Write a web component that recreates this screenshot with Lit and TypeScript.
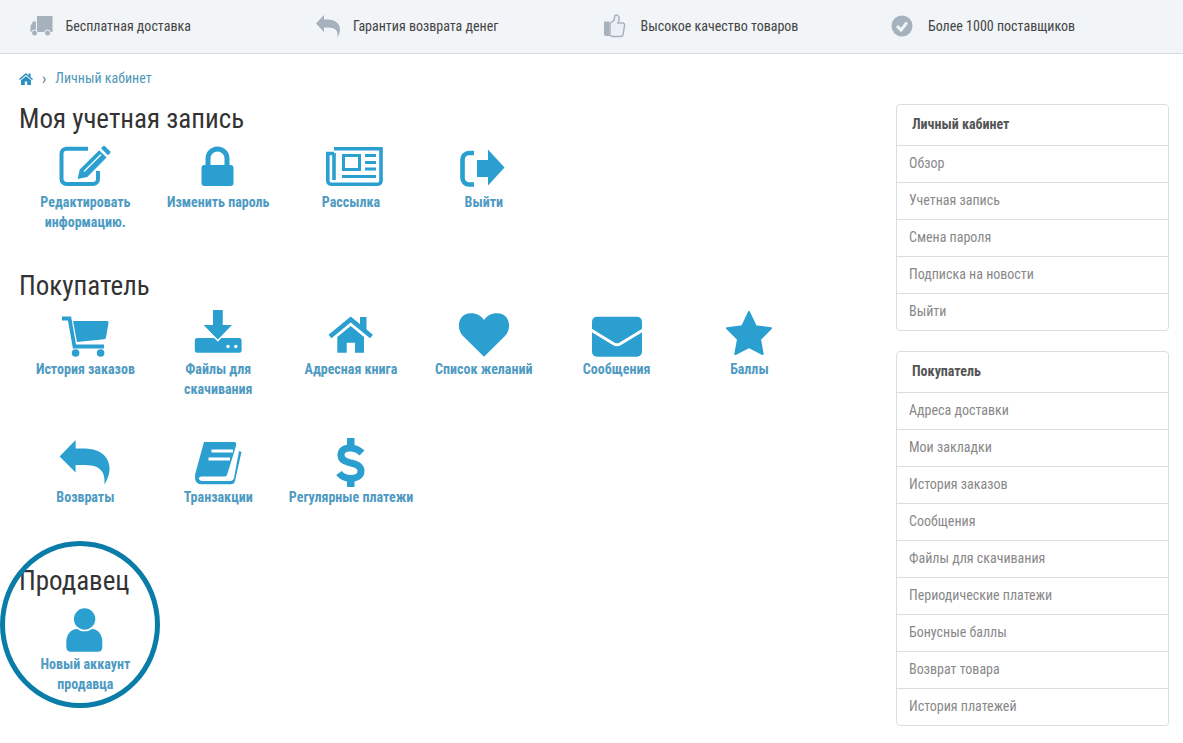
import { LitElement, html, css, svg } from "lit";
import { customElement } from "lit/decorators.js";

const I = {
  edit: svg`<path d="M33 6.8H11.5a5 5 0 0 0-5 5V37a5 5 0 0 0 5 5H38a5 5 0 0 0 5-5V29" fill="none" stroke="currentColor" stroke-width="4"/><path d="M22.6 37l2.2-9.6L44.2 8.2l7.3 7.4L32.3 35z"/><path d="M46 6.2l2-2q1-1 2 0l5 5q1 1 0 2l-2 2z"/><path d="M29 29.5L46 12.5" stroke="#fff" stroke-width="1.2"/>`,
  lock: svg`<rect x="13.5" y="23" width="32" height="21" rx="3"/><path d="M20 24v-7.5a9.5 9.5 0 0 1 19 0V24" fill="none" stroke="currentColor" stroke-width="5"/>`,
  news: svg`<path d="M13 6.8H60V39a3.2 3.2 0 0 1-3.2 3.2H10A3.3 3.3 0 0 1 6.8 39V11.5H13M13 11v27" fill="none" stroke="currentColor" stroke-width="3.6"/><rect x="22.5" y="13.5" width="16" height="14" fill="none" stroke="currentColor" stroke-width="3"/><path d="M44 13.5h11M44 20.5h11M44 27h11M21 34.5h34" stroke="currentColor" stroke-width="3" fill="none"/>`,
  out: svg`<path d="M20 11H15a6.5 6.5 0 0 0-6.5 6.5V36a6.5 6.5 0 0 0 6.5 6.5H20" fill="none" stroke="currentColor" stroke-width="4.6"/><path d="M23 18H34V7.5L50.5 25.5 34 43.5V35H23z"/>`,
  cart: svg`<path d="M18 12H52a1.5 1.5 0 0 1 1.5 1.7L51 28.5a2 2 0 0 1-2 1.7L22 33z"/><path d="M7 9.5H14.5L19.5 37.5H49" fill="none" stroke="currentColor" stroke-width="3.8"/><circle cx="20.6" cy="44" r="3.8"/><circle cx="45.6" cy="44" r="3.8"/>`,
  down: svg`<rect x="6.8" y="29" width="46.8" height="14.7" rx="2.5"/><path d="M25 1H34.5V16H43.8L29.8 30.5 15.8 16H25z" stroke="#fff" stroke-width="3" paint-order="stroke"/><path d="M25 1H34.5V16H43.8L29.8 30 15.8 16H25z"/><circle cx="40" cy="37.5" r="1.7" fill="#fff"/><circle cx="47.8" cy="37.5" r="1.7" fill="#fff"/>`,
  home: svg`<path d="M9 27.5L29.7 10.5 50.5 27.5" fill="none" stroke="currentColor" stroke-width="4.6"/><path d="M39 8h6.5V22L39 17z"/><path d="M29.7 17L43 28V43.7H34V33.7H25.7V43.7H16.3V28z"/>`,
  heart: svg`<path d="M30 47.7L9 27C2 20 3.5 4.3 17 4.3 23 4.3 27 7 30 11 33 7 37 4.3 43 4.3 56.5 4.3 58 20 51 27z"/>`,
  mail: svg`<rect x="5" y="7.7" width="50" height="40" rx="5"/><path d="M4 21L27 35q3 1.6 6 0L56 21" fill="none" stroke="#fff" stroke-width="3"/>`,
  star: svg`<path d="M30 3L36.7 17.2 52 19.3 41 30.2 43.7 45 30 38 16.3 45 19 30.2 8 19.3 23.3 17.2z" stroke="currentColor" stroke-width="2" stroke-linejoin="round"/>`,
  reply: svg`<path d="M4.6 19.5L20.6 3V11.5H28C46 11.5 54.6 20 54.6 32 54.6 38 52 43 49.5 47.5 50 39 49 28 30 28H20.6V35.5z"/>`,
  book: svg`<path d="M16 5H46Q49 5 48 9L39 38Q38.5 39.5 36 39.5H14Q10.5 39.5 11 42 11.5 44 14 44H43Q45 44 46 41L51 14 53.5 15 47 44Q46 47.3 43 47.3H13Q7 47.3 7 40 7 37 8 34z"/><path d="M23.5 14H45M20.5 22H42" stroke="#fff" stroke-width="2.8"/>`,
  dollar: svg`<path d="M41 16C37 12 33 11 29 11 23 11 20 14 20 18 20 24 26 25 30 26 35 27 40 29 40 34 40 39 35 41.5 30 41.5 25 41.5 21 40 18 36" fill="none" stroke="currentColor" stroke-width="7"/><rect x="26" y="1" width="7.5" height="9"/><rect x="26" y="41" width="7.5" height="9"/>`,
  person: svg`<path d="M11.3 43V38C11.3 30 16 25.5 22 25H37C43 25.5 47.3 30 47.3 38V43Q47.3 47.7 43 47.7H16Q11.3 47.7 11.3 43z"/><circle cx="29.6" cy="15" r="11.5" stroke="#fff" stroke-width="1.6"/>`,
};

const top = [
  [svg`<path d="M8 2H23.5V18H8z"/><path d="M1.5 12L4 7.5H7V18H1.5z"/><circle cx="5.5" cy="19" r="3" stroke="#f1f5f7" stroke-width="1"/><circle cx="18.5" cy="19" r="3" stroke="#f1f5f7" stroke-width="1"/>`, "Бесплатная доставка"],
  [svg`<path d="M0 9.5L8 1V5.5H11C20 5.5 24 10 24 15.5 24 18.5 22.8 21 21.5 23.5 22 18 21 13.5 12 13.5H8V18z"/>`, "Гарантия возврата денег"],
  [svg`<path d="M0 7.5H5.5V22H2Q0 22 0 20z"/><path d="M6 9.5L10 6 11 1.5Q13.5 0 15 3 15.5 6.5 14 9H19.5Q21 9.8 20.5 12L19 21Q18.5 22.5 16.5 22.5H8Q6 22 6 20.5z" fill="#eaf0f3" stroke="currentColor" stroke-width="1.4"/>`, "Высокое качество товаров"],
  [svg`<circle cx="11" cy="12" r="10.5"/><path d="M6 12L10 16 16 8.5" fill="none" stroke="#f1f5f7" stroke-width="3"/>`, "Более 1000 поставщиков"],
] as const;

const sections = [
  ["Моя учетная запись", [[I.edit, "Редактировать информацию."], [I.lock, "Изменить пароль"], [I.news, "Рассылка"], [I.out, "Выйти"]]],
  ["Покупатель", [[I.cart, "История заказов"], [I.down, "Файлы для скачивания"], [I.home, "Адресная книга"], [I.heart, "Список желаний"], [I.mail, "Сообщения"], [I.star, "Баллы"], [I.reply, "Возвраты"], [I.book, "Транзакции"], [I.dollar, "Регулярные платежи"]]],
  ["Продавец", [[I.person, "Новый аккаунт продавца"]]],
] as const;

const panels = [
  ["Личный кабинет", ["Обзор", "Учетная запись", "Смена пароля", "Подписка на новости", "Выйти"]],
  ["Покупатель", ["Адреса доставки", "Мои закладки", "История заказов", "Сообщения", "Файлы для скачивания", "Периодические платежи", "Бонусные баллы", "Возврат товара", "История платежей"]],
] as const;

@customElement("app-root")
export class AppRoot extends LitElement {
  static styles = css`
    :host { display: block; position: relative; height: 743px; overflow: hidden; background: #fff;
      font-family: "Roboto", "Liberation Sans", sans-serif; font-stretch: 75%; }
    .bar { height: 53px; background: #f1f5f7; border-bottom: 1px solid #d3dbe0; display: grid;
      grid-template-columns: repeat(4, 287.5px); padding-left: 28.5px; align-items: center; }
    .bar div { display: flex; align-items: center; font-size: 14px; line-height: 16px; color: #444; padding-bottom: 1px; }
    .bar svg { width: 24px; height: 24px; margin-right: 13px; fill: #a5b1bc; color: #a5b1bc; flex: none; }
    .crumb { display: flex; align-items: center; height: 48px; padding-left: 19px; font-size: 14px; color: #4f97b8; }
    .crumb svg { width: 14px; height: 13px; fill: #2a8fc0; }
    .crumb i { font-style: normal; margin: 0 9px 0 9px; color: #5a7a8c; font-size: 16px; }
    .page { display: flex; padding-left: 19px; justify-content: space-between; padding-right: 14px; }
    .main { width: 797px; }
    h2 { font-size: 27px; font-weight: 400; line-height: 34px; margin: 0 0 6px; color: #333; }
    section { margin-bottom: 37px; }
    .grid { display: grid; grid-template-columns: repeat(6, 132.8px); row-gap: 38px; }
    .item { display: flex; flex-direction: column; align-items: center; text-align: center; height: 90px; }
    .item svg { width: 60px; height: 50px; fill: #2a9fd0; color: #2a9fd0; overflow: visible; flex: none; }
    .item span { width: 128px; font-size: 14px; line-height: 20px; font-weight: 700; color: #4d9ac2; }
    aside { width: 273px; padding-top: 2px; }
    .panel { border: 1px solid #ddd; border-radius: 4px; margin-bottom: 20px; }
    .panel h3 { margin: 0; height: 40px; line-height: 39px; padding-left: 15px; font-size: 14px; font-weight: 700; color: #555; }
    .panel div { height: 36px; line-height: 35px; border-top: 1px solid #ddd; padding-left: 12px; font-size: 14px; color: #888; }
    .ring { position: absolute; left: 0; top: 541px; width: 160px; height: 167px; box-sizing: border-box;
      border: 5px solid #0a7ca8; border-radius: 50%; pointer-events: none; }
  `;
  render() {
    return html`
      <div class="bar">${top.map(([ic, t]) => html`<div><svg viewBox="0 0 24 24">${ic}</svg>${t}</div>`)}</div>
      <div class="crumb"><svg viewBox="0 0 14 13"><path d="M7 1L0 7l1 1 6-5 6 5 1-1-2.5-2V1.5h-2v2z"/><path d="M7 4.2L2 8.3V13h3.8V9.5h2.4V13H12V8.3z"/></svg><i>›</i>Личный кабинет</div>
      <div class="page">
        <div class="main">
          ${sections.map(([h, items]) => html`<section><h2>${h}</h2><div class="grid">
            ${items.map(([ic, t]) => html`<div class="item"><svg viewBox="0 0 60 50">${ic}</svg><span>${t}</span></div>`)}
          </div></section>`)}
        </div>
        <aside>
          ${panels.map(([h, rows]) => html`<div class="panel"><h3>${h}</h3>${rows.map((r) => html`<div>${r}</div>`)}</div>`)}
        </aside>
      </div>
      <div class="ring"></div>
    `;
  }
}
